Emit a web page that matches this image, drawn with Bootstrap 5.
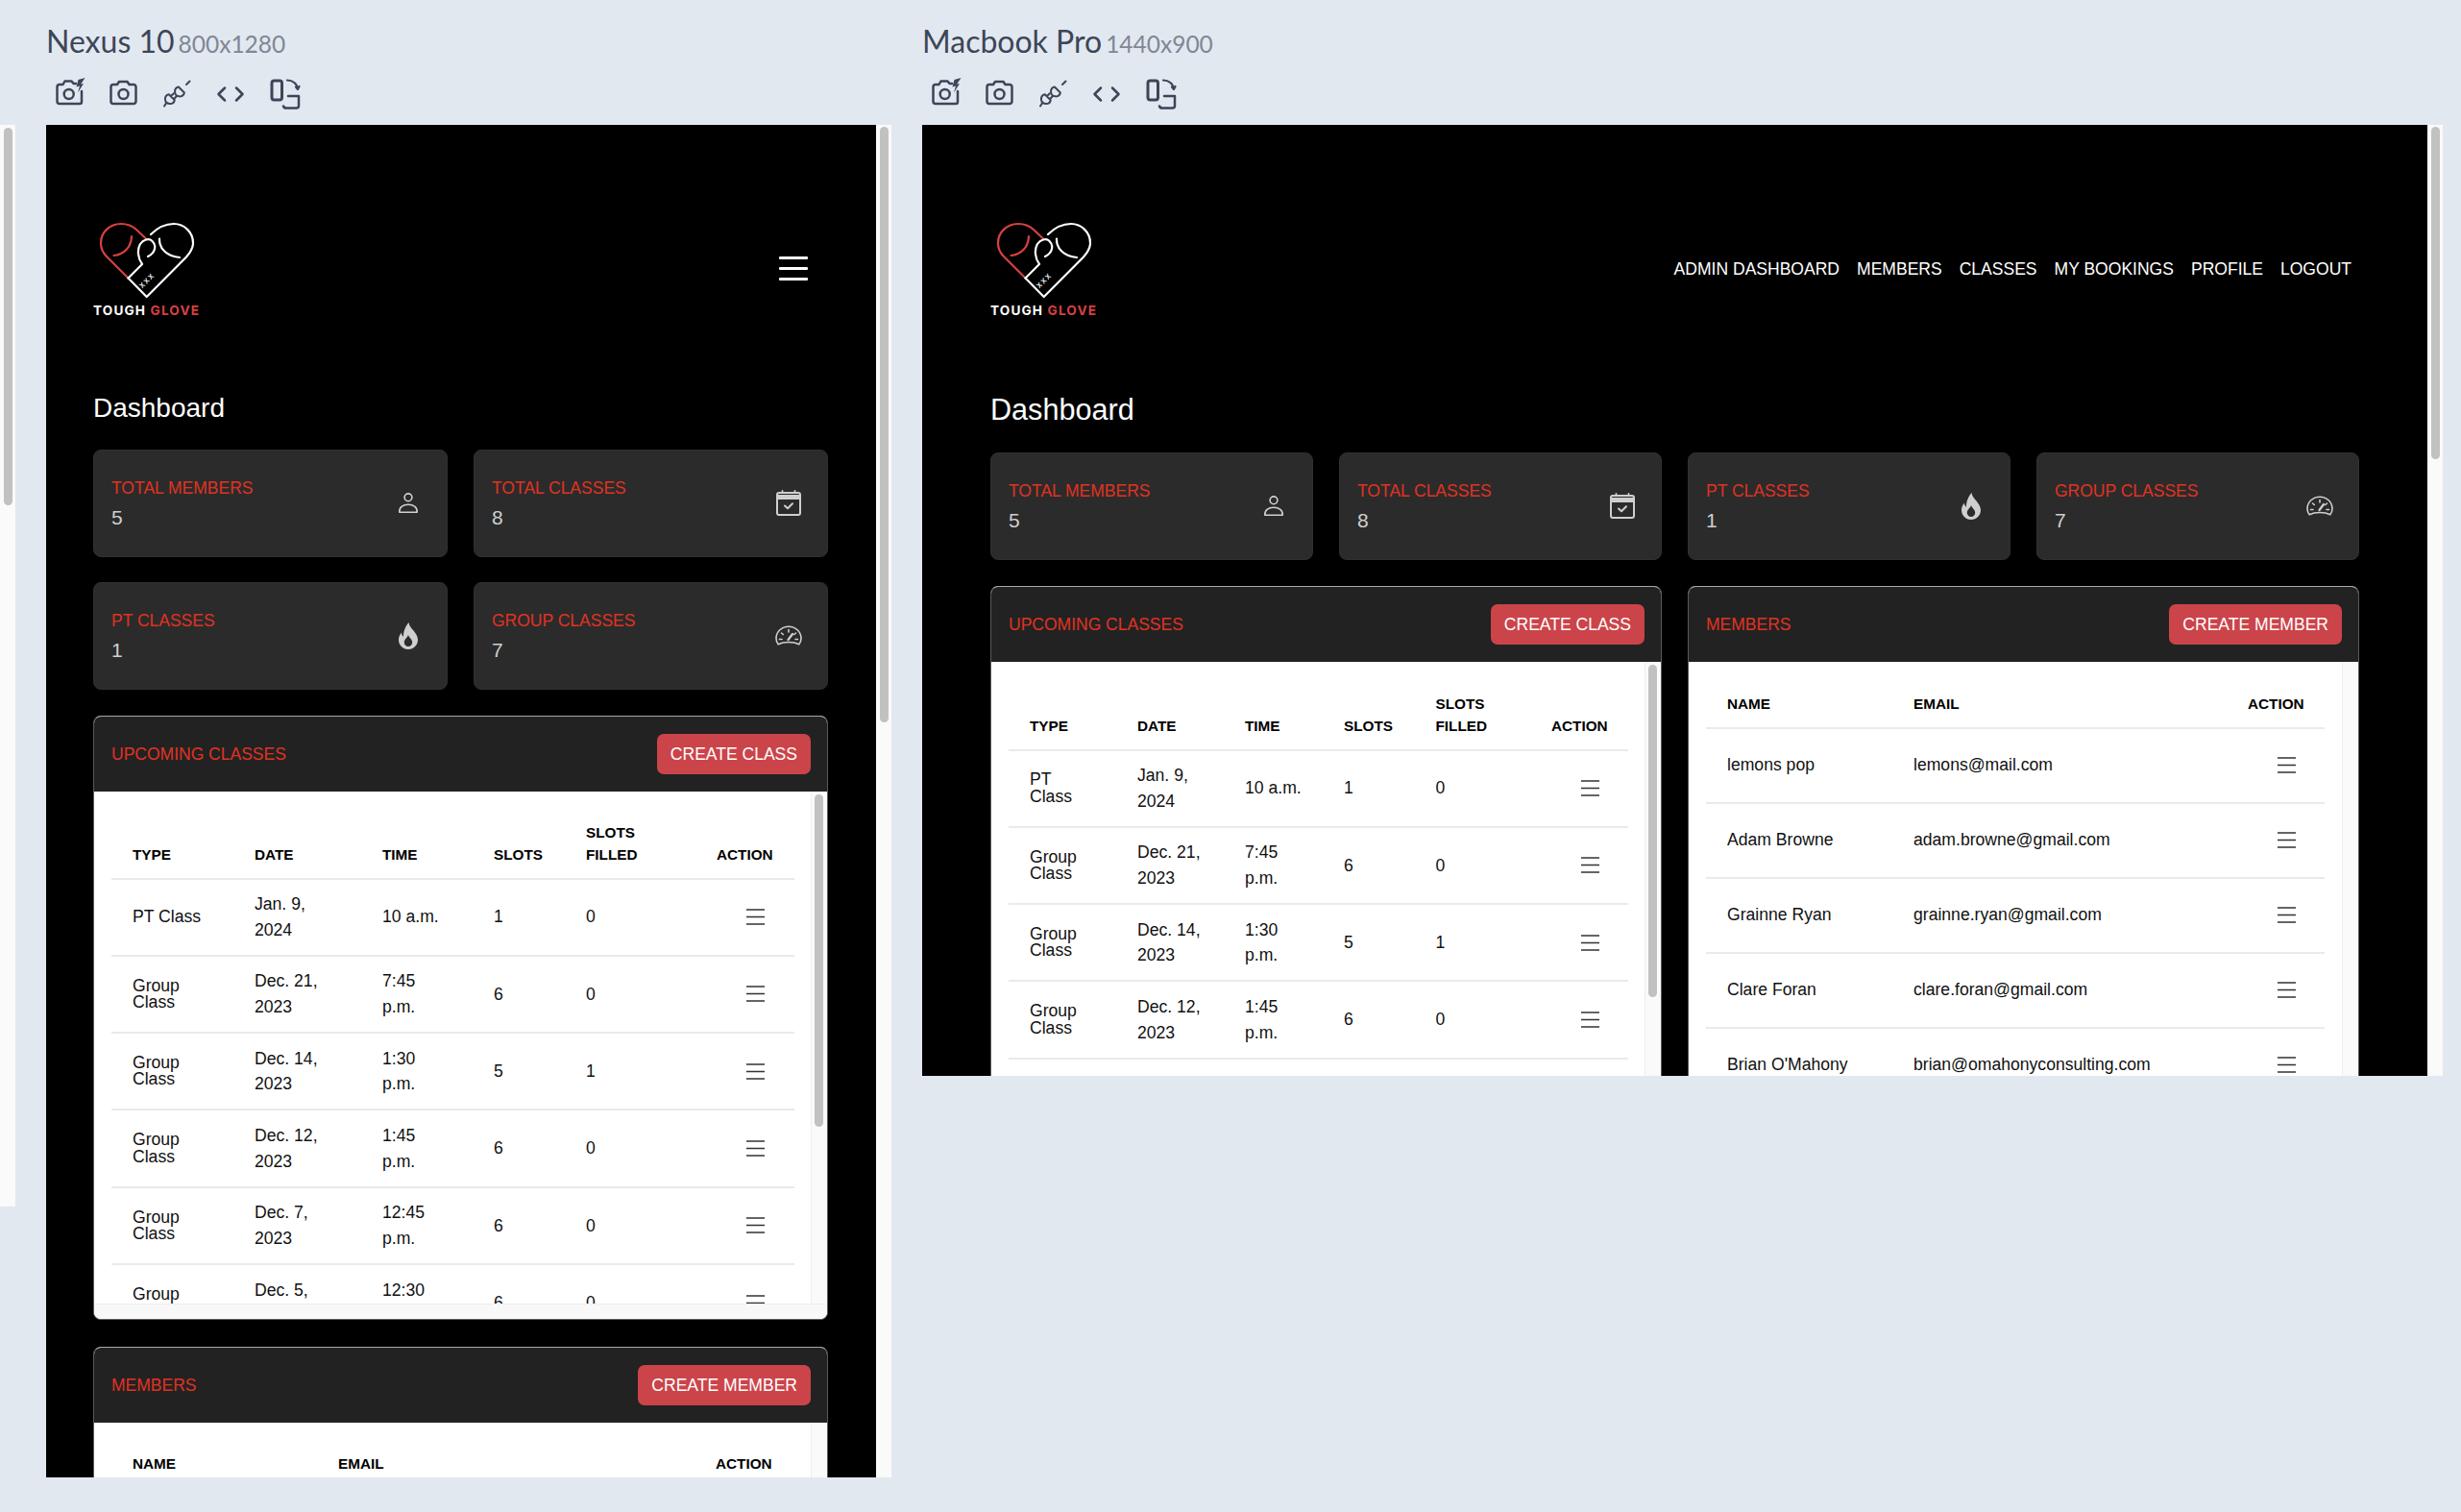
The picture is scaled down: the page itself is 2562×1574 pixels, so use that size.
<!DOCTYPE html>
<html lang="en">
<head>
    <meta charset="UTF-8">
    <meta name="viewport" content="width=device-width, initial-scale=1.0">
    <title>Tough Glove - Responsive Preview</title>

    <!-- Bootstrap CSS -->
    <link href="https://cdn.jsdelivr.net/npm/bootstrap@5.3.0/dist/css/bootstrap.min.css" rel="stylesheet">

    <!-- Custom CSS -->
    <style>
        html, body {
            height: 100%;
            overflow: hidden;
        }

        body {
            background-color: #e2e8f0;
            font-family: "Liberation Sans", Arial, sans-serif;
            color: #111;
        }

        /* stray page scrollbar on the far left */
        .stray-bar {
            width: 16px;
            height: 1126px;
            margin-top: 130px;
            margin-right: 32px;
            background: #fafafa;
            flex: none;
        }

        .bar-thumb {
            background: #c1c1c1;
            border-radius: 5px;
        }

        .stray-bar .bar-thumb {
            width: 9px;
            height: 393px;
            margin: 3px 0 0 4px;
        }

        .device {
            flex: none;
            margin-right: 32px;
        }

        .device-a { width: 880px; }
        .device-b { width: 1583px; margin-right: 0; }

        .device-name {
            font-family: Lato, "Noto Sans", sans-serif;
            font-size: 32px;
            line-height: 38px;
            color: #3c4658;
            margin: 24px 0 18px;
            font-weight: 400;
            white-space: nowrap;
        }

        .device-name span {
            font-size: 24.5px;
            line-height: 1;
            margin-left: 4px;
            color: #7f8794;
        }

        .tool-row {
            height: 34px;
            margin-bottom: 16px;
            padding-left: 9px;
            gap: 24px;
        }

        .tool-row svg {
            width: 32px;
            height: 34px;
            fill: none;
            stroke: #3c4658;
            stroke-width: 2.5;
            stroke-linecap: round;
            stroke-linejoin: round;
        }

        .frame-a { height: 1408px; }
        .frame-b { height: 990px; }

        .viewport {
            flex: 1 1 0;
            min-width: 0;
            background: #000;
            overflow: hidden;
        }

        .frame-a .viewport { padding: 101px 50px 0 49px; }
        .frame-b .viewport { padding: 101px 71px 0 71px; }

        .frame-bar {
            flex: none;
            width: 16px;
            background: #fafafa;
        }

        .frame-bar .bar-thumb {
            width: 9px;
            margin: 2px 0 0 4px;
        }

        .frame-a .bar-thumb { height: 620px; }
        .frame-b .bar-thumb { height: 346px; }

        /* nav */
        .brand-box {
            width: 110px;
            height: 97px;
        }

        .brand-box svg {
            display: block;
            width: 110px;
            height: 80px;
            fill: none;
            stroke-width: 2.2;
            stroke-linecap: round;
            stroke-linejoin: round;
        }

        .brand-name {
            font-family: Inter, "Liberation Sans", sans-serif;
            font-weight: 700;
            font-size: 13.6px;
            line-height: 17px;
            letter-spacing: 1.15px;
            margin-top: 4px;
            white-space: nowrap;
            color: #fff;
        }

        .brand-name span { color: #d94040; }

        .burger {
            width: 30px;
            margin-right: 21px;
        }

        .burger i {
            display: block;
            height: 3px;
            background: #fff;
            border-radius: 1px;
            margin: 8px 0;
        }

        .top-links {
            gap: 18px;
            margin-right: 8px;
        }

        .top-links a {
            color: #fff;
            font-size: 17.55px;
            line-height: 24px;
            text-decoration: none;
            text-transform: uppercase;
        }

        .dash-title {
            color: #fff;
            font-size: 28px;
            line-height: 34px;
            font-weight: 400;
            margin: 80px 0 26px;
        }

        .frame-b .dash-title {
            font-size: 30.6px;
            margin: 81px 0 28px;
        }

        /* stat cards */
        .stat-row {
            --bs-gutter-x: 27px;
            --bs-gutter-y: 26px;
        }

        .stat-card {
            height: 112px;
            background: #2b2b2b;
            border: 1px solid #303030;
            border-radius: 8px;
            padding: 0 26px 0 18px;
        }

        .stat-label {
            color: #e03222;
            font-size: 17.5px;
            line-height: 27px;
            margin-top: 1px;
            text-transform: uppercase;
        }

        .stat-value {
            color: #cfcfcf;
            font-size: 21px;
            line-height: 33px;
        }

        .stat-icon {
            width: 28px;
            height: 28px;
            flex: none;
            fill: none;
            stroke: #cfcfcf;
            stroke-width: 1.6;
            stroke-linecap: round;
            stroke-linejoin: round;
        }

        /* table cards */
        .panel-row {
            margin-top: 27px;
            --bs-gutter-x: 27px;
        }

        .panel {
            border-radius: 8px;
            border: 1px solid #5a5a5a;
            border-top-color: #a8a8a8;
            background: #fff;
            overflow: hidden;
        }

        .panel + .panel { margin-top: 28px; }

        .panel-head {
            height: 78px;
            background: #222;
            border: 0;
            padding: 0 17px 0 18px;
            border-radius: 0;
        }

        .panel-title {
            color: #e03222;
            font-size: 17.5px;
            text-transform: uppercase;
        }

        .panel-btn {
            height: 42px;
            padding: 0 14px;
            font-size: 17.55px;
            line-height: 42px;
            text-transform: uppercase;
            color: #fff;
            background: #cb444a;
            border: 0;
            border-radius: 7px;
        }

        .scroll-wrap { height: 533px; }

        .scroll-pane {
            flex: 1 1 0;
            min-width: 0;
            padding: 17.500px 18px 0 18px;
            overflow: hidden;
            background: #fff;
        }

        .frame-b .scroll-pane { padding-top: 18.500px; }

        .scroll-track {
            flex: none;
            width: 17px;
            background: #fafafa;
            border-left: 1px solid #eee;
        }

        .scroll-track .bar-thumb {
            width: 9px;
            height: 346px;
            margin: 3px 0 0 3px;
        }

        .scroll-foot {
            height: 16px;
            background: #f8f8f8;
            border-top: 1px solid #eee;
        }

        .tg-table {
            table-layout: fixed;
            width: 100%;
            margin: 0;
            color: #111;
            font-size: 17.6px;
            border-collapse: collapse;
        }

        .tg-table th {
            font-size: 15.3px;
            line-height: 23px;
            font-weight: 700;
            text-transform: uppercase;
            color: #000;
            padding: 13px 22px;
            vertical-align: bottom;
            border-bottom: 2px solid #e8eaed;
            white-space: nowrap;
        }

        .tg-table td {
            height: 80.3px;
            padding: 0 22px;
            line-height: 26.5px;
            vertical-align: middle;
            border-bottom: 2px solid #e8eaed;
            box-shadow: none;
        }

        .tg-table.people td { height: 78px; white-space: nowrap; }

        .tg-table .type-cell span {
            display: block;
            line-height: 17.3px;
        }

        .tg-table .act-cell {
            padding: 0 0 0 53px;
        }

        .row-menu {
            display: block;
            width: 19px;
            height: 17px;
            stroke: #333;
            stroke-width: 1.7;
            fill: none;
        }

        /* column widths per table */
        .a1 { width: 127px; } .a2 { width: 133px; } .a3 { width: 116px; } .a4 { width: 96px; } .a5 { width: 136px; } .a6 { width: 103px; }
        .b1 { width: 112px; } .b2 { width: 112px; } .b3 { width: 103px; } .b4 { width: 95.5px; } .b5 { width: 120.5px; } .b6 { width: 102px; }
        .m1 { width: 214px; } .m3 { width: 103px; }
        .n1 { width: 194px; } .n3 { width: 102px; }
    </style>
</head>
<body class="d-flex align-items-start">

    <!-- shared icons -->
    <svg width="0" height="0" class="position-absolute">
        <symbol id="ic-person" viewBox="0 0 28 28">
            <circle cx="14" cy="7.8" r="3.9"/>
            <path d="M4.8 23.2c-.5-5 3.6-8 9.2-8s9.700 3 9.200 8z"/>
        </symbol>
        <symbol id="ic-cal" viewBox="0 0 28 28">
            <rect x="2" y="3" width="24" height="23" rx="2" stroke-width="2"/>
            <path d="M2 5h24v5H2z" fill="#cfcfcf" stroke="none"/>
            <path d="M7.500 1v2M20.500 1v2" stroke-width="1.800"/>
            <path d="M10 16.500l3 2.800 5-5" stroke-width="2"/>
        </symbol>
        <symbol id="ic-flame" viewBox="0 0 28 28">
            <path fill="#cfcfcf" stroke="none" fill-rule="evenodd" d="M14.500 0c.6 4 3 6 5 8.500 2.300 3 4.500 6 4.500 9.500 0 5.600-4.400 10-10 10S4 23.600 4 18c0-3 1.200-5.400 3-7.500.1 2 .8 3.400 2 4.200C8.800 9.500 11 4 14.500 0zM14 13c-.8 3-4.200 4.300-4.200 7.800 0 2.400 1.900 4.200 4.200 4.200s4.200-1.800 4.200-4.200C18.200 17.300 14.800 16 14 13z"/>
        </symbol>
        <symbol id="ic-gauge" viewBox="0 0 28 28">
            <path d="M3.200 22.800C1.800 21 1 19 1 16.500 1 9.600 6.800 4.200 14 4.200s13 5.400 13 12.300c0 2.500-.8 4.500-2.200 6.300-3-1.600-6.500-2.300-10.800-2.300s-7.800.7-10.800 2.300z"/>
            <path d="M14 7.500v2.500M6.500 11l1.800 1.500M21.500 11l-1.800 1.500M4.500 17.500h2.500M21 17.500h2.500"/>
            <path d="M13.500 18l4.500-6" stroke-width="2.200"/>
        </symbol>
        <symbol id="ic-menu" viewBox="0 0 19 17">
            <path d="M0 1h19M0 8.500h19M0 16h19"/>
        </symbol>
        <symbol id="tg-logo" viewBox="0 0 110 80">
            <path stroke="#d94040" d="M54.500 17L45 8C40 3.500 35 2 29 2 17 2 8 11 8 22c0 6 2 10 6 14l22.500 22.500"/>
            <path stroke="#d94040" d="M40 15c0 11-8 19-18.500 20"/>
            <path stroke="#fff" d="M36.500 58.500L55.700 78 97 36.500c4-4.500 7-8.500 7-14.500 0-11-9-20-20-20-9 0-17 4-24 11"/>
            <path stroke="#fff" d="M36.500 58.500L51 44c-4.500-6-5.500-15-2-21 3-4.500 9-6.500 12.500-3 4.500 4.500 3.500 12-4.500 16"/>
            <path stroke="#fff" d="M69 17.500c-.5 10.500 8 18.500 21 19.500"/>
            <text x="56" y="63.500" transform="rotate(-45 56 61)" text-anchor="middle" fill="#fff" stroke="none" font-family="Inter, sans-serif" font-weight="600" font-size="7" letter-spacing="1.300">XXX</text>
        </symbol>
        <symbol id="tool-flash" viewBox="0 0 32 34">
            <path d="M22 7h-2.500l-2-2.500h-7L8.500 8H5a2.500 2.500 0 0 0-2.500 2.500v15A2.500 2.500 0 0 0 5 28h21a2 2 0 0 0 2-2V15"/>
            <circle cx="14.700" cy="18" r="5"/>
            <path fill="#3c4658" stroke="none" d="M31.500 1L24.500 3 22.500 10.500 26 9.500 24 16.500 30 7 27.200 7.500z"/>
        </symbol>
        <symbol id="tool-cam" viewBox="0 0 32 34">
            <path d="M5 8h4l2-3h8.500l2 3H26a2.500 2.500 0 0 1 2.500 2.500v15A2.500 2.500 0 0 1 26 28H5a2.500 2.500 0 0 1-2.500-2.500v-15A2.500 2.500 0 0 1 5 8z"/>
            <circle cx="15.500" cy="18" r="5"/>
        </symbol>
        <symbol id="tool-plug" viewBox="0 0 32 34">
            <path stroke-width="2" d="M12.800 24.200L6.800 18.200A5 5 0 1 0 12.800 24.200zM8.800 20.200L11.800 17.200M11.800 23.200L14.800 20.200M4.500 26.500L2 30.500"/>
            <path stroke-width="2" d="M22.900 16.500L16.900 10.500A5 5 0 1 0 22.900 16.500zM25 8L28.500 4.500"/>
        </symbol>
        <symbol id="tool-code" viewBox="0 0 32 34">
            <path d="M9 11.500L2.500 18 9 24.500M21 11.500L27.500 18 21 24.500"/>
        </symbol>
        <symbol id="tool-rotate" viewBox="0 0 32 34">
            <rect x="2" y="4" width="10.500" height="20" rx="2.500" stroke-width="3"/>
            <path d="M18 3.500c5.500 0 10.500 3.500 11 9.500M27 10.500l2 2.500 1.500-3" stroke-width="2.200"/>
            <path d="M14 30.500c.5 1.500 1.500 2 3 2h10.500c1.500 0 2.500-1 2.500-2.500V20h-11" stroke-width="2.500"/>
        </symbol>
    </svg>

    <div class="stray-bar"><div class="bar-thumb"></div></div>

    <!-- Nexus 10 -->
    <section class="device device-a">
        <h2 class="device-name">Nexus 10<span>800x1280</span></h2>
        <div class="tool-row d-flex">
            <svg><use href="#tool-flash"/></svg>
            <svg><use href="#tool-cam"/></svg>
            <svg><use href="#tool-plug"/></svg>
            <svg><use href="#tool-code"/></svg>
            <svg><use href="#tool-rotate"/></svg>
        </div>
        <div class="frame-a d-flex">
            <div class="viewport">
                <nav class="d-flex justify-content-between align-items-center">
                    <div class="brand-box">
                        <svg><use href="#tg-logo"/></svg>
                        <div class="brand-name">TOUGH <span>GLOVE</span></div>
                    </div>
                    <div class="burger"><i></i><i></i><i></i></div>
                </nav>

                <h4 class="dash-title">Dashboard</h4>

                <div class="row stat-row">
                    <div class="col-6">
                        <div class="stat-card d-flex justify-content-between align-items-center">
                            <div><div class="stat-label">Total Members</div><div class="stat-value">5</div></div>
                            <svg class="stat-icon"><use href="#ic-person"/></svg>
                        </div>
                    </div>
                    <div class="col-6">
                        <div class="stat-card d-flex justify-content-between align-items-center">
                            <div><div class="stat-label">Total Classes</div><div class="stat-value">8</div></div>
                            <svg class="stat-icon"><use href="#ic-cal"/></svg>
                        </div>
                    </div>
                    <div class="col-6">
                        <div class="stat-card d-flex justify-content-between align-items-center">
                            <div><div class="stat-label">PT Classes</div><div class="stat-value">1</div></div>
                            <svg class="stat-icon"><use href="#ic-flame"/></svg>
                        </div>
                    </div>
                    <div class="col-6">
                        <div class="stat-card d-flex justify-content-between align-items-center">
                            <div><div class="stat-label">Group Classes</div><div class="stat-value">7</div></div>
                            <svg class="stat-icon"><use href="#ic-gauge"/></svg>
                        </div>
                    </div>
                </div>

                <div class="panel-row">
                    <div class="card panel">
                        <div class="card-header panel-head d-flex justify-content-between align-items-center">
                            <span class="panel-title">Upcoming Classes</span>
                            <button class="btn panel-btn">Create Class</button>
                        </div>
                        <div class="scroll-wrap d-flex">
                            <div class="scroll-pane">
                                <table class="tg-table">
                                    <thead>
                                        <tr>
                                            <th class="a1">Type</th><th class="a2">Date</th><th class="a3">Time</th><th class="a4">Slots</th>
                                            <th class="a5">Slots<br>Filled</th><th class="a6">Action</th>
                                        </tr>
                                    </thead>
                                    <tbody class="class-rows"></tbody>
                                </table>
                            </div>
                            <div class="scroll-track"><div class="bar-thumb"></div></div>
                        </div>
                        <div class="scroll-foot"></div>
                    </div>

                    <div class="card panel">
                        <div class="card-header panel-head d-flex justify-content-between align-items-center">
                            <span class="panel-title">Members</span>
                            <button class="btn panel-btn">Create Member</button>
                        </div>
                        <div class="scroll-wrap d-flex">
                            <div class="scroll-pane">
                                <table class="tg-table people">
                                    <thead>
                                        <tr><th class="m1">Name</th><th>Email</th><th class="m3">Action</th></tr>
                                    </thead>
                                    <tbody class="member-rows"></tbody>
                                </table>
                            </div>
                            <div class="scroll-track"></div>
                        </div>
                    </div>
                </div>
            </div>
            <div class="frame-bar"><div class="bar-thumb"></div></div>
        </div>
    </section>

    <!-- Macbook Pro -->
    <section class="device device-b">
        <h2 class="device-name">Macbook Pro<span>1440x900</span></h2>
        <div class="tool-row d-flex">
            <svg><use href="#tool-flash"/></svg>
            <svg><use href="#tool-cam"/></svg>
            <svg><use href="#tool-plug"/></svg>
            <svg><use href="#tool-code"/></svg>
            <svg><use href="#tool-rotate"/></svg>
        </div>
        <div class="frame-b d-flex">
            <div class="viewport">
                <nav class="d-flex justify-content-between align-items-center">
                    <div class="brand-box">
                        <svg><use href="#tg-logo"/></svg>
                        <div class="brand-name">TOUGH <span>GLOVE</span></div>
                    </div>
                    <div class="top-links d-flex">
                        <a href="#">Admin Dashboard</a>
                        <a href="#">Members</a>
                        <a href="#">Classes</a>
                        <a href="#">My Bookings</a>
                        <a href="#">Profile</a>
                        <a href="#">Logout</a>
                    </div>
                </nav>

                <h4 class="dash-title">Dashboard</h4>

                <div class="row stat-row">
                    <div class="col-3">
                        <div class="stat-card d-flex justify-content-between align-items-center">
                            <div><div class="stat-label">Total Members</div><div class="stat-value">5</div></div>
                            <svg class="stat-icon"><use href="#ic-person"/></svg>
                        </div>
                    </div>
                    <div class="col-3">
                        <div class="stat-card d-flex justify-content-between align-items-center">
                            <div><div class="stat-label">Total Classes</div><div class="stat-value">8</div></div>
                            <svg class="stat-icon"><use href="#ic-cal"/></svg>
                        </div>
                    </div>
                    <div class="col-3">
                        <div class="stat-card d-flex justify-content-between align-items-center">
                            <div><div class="stat-label">PT Classes</div><div class="stat-value">1</div></div>
                            <svg class="stat-icon"><use href="#ic-flame"/></svg>
                        </div>
                    </div>
                    <div class="col-3">
                        <div class="stat-card d-flex justify-content-between align-items-center">
                            <div><div class="stat-label">Group Classes</div><div class="stat-value">7</div></div>
                            <svg class="stat-icon"><use href="#ic-gauge"/></svg>
                        </div>
                    </div>
                </div>

                <div class="row panel-row">
                    <div class="col-6">
                        <div class="card panel">
                            <div class="card-header panel-head d-flex justify-content-between align-items-center">
                                <span class="panel-title">Upcoming Classes</span>
                                <button class="btn panel-btn">Create Class</button>
                            </div>
                            <div class="scroll-wrap d-flex">
                                <div class="scroll-pane">
                                    <table class="tg-table">
                                        <thead>
                                            <tr>
                                                <th class="b1">Type</th><th class="b2">Date</th><th class="b3">Time</th><th class="b4">Slots</th>
                                                <th class="b5">Slots<br>Filled</th><th class="b6">Action</th>
                                            </tr>
                                        </thead>
                                        <tbody class="class-rows"></tbody>
                                    </table>
                                </div>
                                <div class="scroll-track"><div class="bar-thumb"></div></div>
                            </div>
                        </div>
                    </div>
                    <div class="col-6">
                        <div class="card panel">
                            <div class="card-header panel-head d-flex justify-content-between align-items-center">
                                <span class="panel-title">Members</span>
                                <button class="btn panel-btn">Create Member</button>
                            </div>
                            <div class="scroll-wrap d-flex">
                                <div class="scroll-pane">
                                    <table class="tg-table people">
                                        <thead>
                                            <tr><th class="n1">Name</th><th>Email</th><th class="n3">Action</th></tr>
                                        </thead>
                                        <tbody class="member-rows"></tbody>
                                    </table>
                                </div>
                                <div class="scroll-track"></div>
                            </div>
                        </div>
                    </div>
                </div>
            </div>
            <div class="frame-bar"><div class="bar-thumb"></div></div>
        </div>
    </section>

    <!-- Bootstrap JS -->
    <script src="https://cdn.jsdelivr.net/npm/bootstrap@5.3.0/dist/js/bootstrap.bundle.min.js"></script>

    <!-- Custom JS -->
    <script>
        const classes = [
            ['PT Class', 'Jan. 9,<br>2024', '10 a.m.', 1, 0],
            ['Group Class', 'Dec. 21,<br>2023', '7:45<br>p.m.', 6, 0],
            ['Group Class', 'Dec. 14,<br>2023', '1:30<br>p.m.', 5, 1],
            ['Group Class', 'Dec. 12,<br>2023', '1:45<br>p.m.', 6, 0],
            ['Group Class', 'Dec. 7,<br>2023', '12:45<br>p.m.', 6, 0],
            ['Group Class', 'Dec. 5,<br>2023', '12:30<br>p.m.', 6, 0],
        ];

        const members = [
            ['lemons pop', 'lemons@mail.com'],
            ['Adam Browne', 'adam.browne@gmail.com'],
            ['Grainne Ryan', 'grainne.ryan@gmail.com'],
            ['Clare Foran', 'clare.foran@gmail.com'],
            ["Brian O'Mahony", 'brian@omahonyconsulting.com'],
        ];

        const menuCell = '<td class="act-cell"><svg class="row-menu"><use href="#ic-menu"/></svg></td>';

        document.querySelectorAll('.class-rows').forEach(function(body) {
            body.innerHTML = classes.map(c => `
                <tr>
                    <td class="type-cell"><span>${c[0]}</span></td>
                    <td>${c[1]}</td>
                    <td>${c[2]}</td>
                    <td>${c[3]}</td>
                    <td>${c[4]}</td>
                    ${menuCell}
                </tr>`).join('');
        });

        document.querySelectorAll('.member-rows').forEach(function(body) {
            body.innerHTML = members.map(m => `
                <tr>
                    <td>${m[0]}</td>
                    <td>${m[1]}</td>
                    ${menuCell}
                </tr>`).join('');
        });
    </script>

</body>
</html>
